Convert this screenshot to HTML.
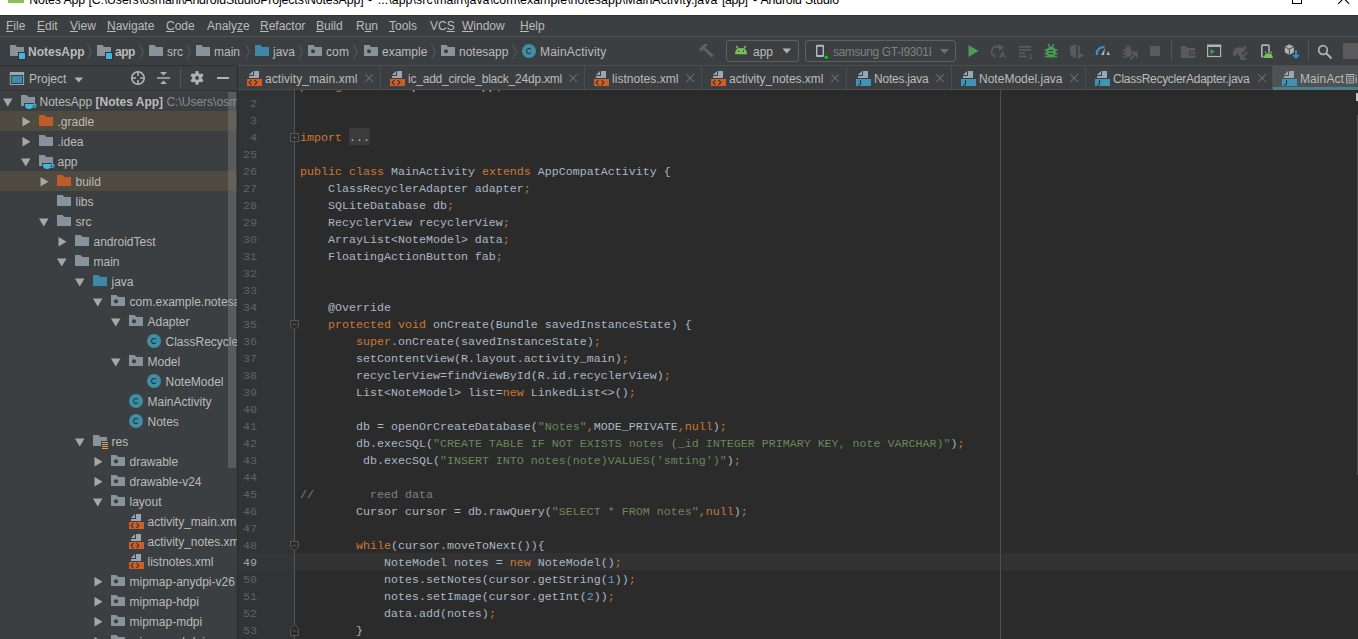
<!DOCTYPE html><html><head><meta charset="utf-8"><style>
*{margin:0;padding:0;box-sizing:border-box}
html,body{width:1358px;height:639px;overflow:hidden;background:#3c3f41}
body{position:relative;font-family:"Liberation Sans",sans-serif;font-size:12px;color:#bbbbbb}
.a{position:absolute}
.t{position:absolute;white-space:pre;line-height:14px;font-size:12px}
.m{position:absolute;white-space:pre;font-family:"Liberation Mono",monospace;font-size:11.67px;line-height:17px}
.k{color:#cc7832}.s{color:#6a8759}.n{color:#6897bb}.c{color:#808080}.an{color:#bbb529}
u{text-decoration:underline;text-underline-offset:1px;text-decoration-thickness:1px}
</style></head><body><div class="a" style="left:0px;top:0px;width:1358px;height:15px;background:#ffffff;"></div>
<div class="a" style="left:8px;top:0px;width:16px;height:3px;background:#8cc152;"></div>
<div class="t" style="left:29.3px;top:-7.28px;color:#000000;font-size:12.34px;letter-spacing:-0.122px;">Notes App [C:\Users\osmani\AndroidStudioProjects\NotesApp]</div>
<div class="t" style="left:368px;top:-7.28px;color:#000000;font-size:12.34px;letter-spacing:-0.109px;">-</div>
<div class="t" style="left:377.8px;top:-7.28px;color:#000000;font-size:12.34px;letter-spacing:0.068px;">...\app\src\main\java\com\example\notesapp\MainActivity.java</div>
<div class="t" style="left:721.9px;top:-7.28px;color:#000000;font-size:12.34px;letter-spacing:-0.349px;">[app]</div>
<div class="t" style="left:753px;top:-7.28px;color:#000000;font-size:12.34px;letter-spacing:-0.109px;">-</div>
<div class="t" style="left:760.5px;top:-7.28px;color:#000000;font-size:12.34px;letter-spacing:-0.182px;">Android Studio</div>
<div class="a" style="left:1292px;top:-6px;width:10px;height:10px;border:1px solid #000"></div>
<svg class="a" style="left:1330px;top:-10px" width="28" height="16"><path d="M8.2 13.8 L13.7 8.3 L19.2 13.8 M13.7 8.3 L8.2 2.8 M13.7 8.3 L19.2 2.8" stroke="#000" stroke-width="1.1" fill="none"/></svg>
<div class="a" style="left:0px;top:15px;width:1358px;height:1px;background:#303234;"></div>
<div class="a" style="left:0px;top:16px;width:1358px;height:20px;background:#3c3f41;"></div>
<div class="a" style="left:0px;top:36px;width:1358px;height:1px;background:#515151;"></div>
<div class="t" style="left:6px;top:18.84px;color:#bbbbbb;font-size:12px;"><u>F</u>ile</div>
<div class="t" style="left:37px;top:18.84px;color:#bbbbbb;font-size:12px;"><u>E</u>dit</div>
<div class="t" style="left:70px;top:18.84px;color:#bbbbbb;font-size:12px;"><u>V</u>iew</div>
<div class="t" style="left:107px;top:18.84px;color:#bbbbbb;font-size:12px;"><u>N</u>avigate</div>
<div class="t" style="left:166px;top:18.84px;color:#bbbbbb;font-size:12px;"><u>C</u>ode</div>
<div class="t" style="left:207px;top:18.84px;color:#bbbbbb;font-size:12px;">Analy<u>z</u>e</div>
<div class="t" style="left:260px;top:18.84px;color:#bbbbbb;font-size:12px;"><u>R</u>efactor</div>
<div class="t" style="left:316px;top:18.84px;color:#bbbbbb;font-size:12px;"><u>B</u>uild</div>
<div class="t" style="left:356px;top:18.84px;color:#bbbbbb;font-size:12px;">R<u>u</u>n</div>
<div class="t" style="left:389px;top:18.84px;color:#bbbbbb;font-size:12px;"><u>T</u>ools</div>
<div class="t" style="left:430px;top:18.84px;color:#bbbbbb;font-size:12px;">VC<u>S</u></div>
<div class="t" style="left:462px;top:18.84px;color:#bbbbbb;font-size:12px;"><u>W</u>indow</div>
<div class="t" style="left:520px;top:18.84px;color:#bbbbbb;font-size:12px;"><u>H</u>elp</div>
<div class="a" style="left:0px;top:37px;width:1358px;height:28px;background:#3c3f41;"></div>
<svg class="a" style="left:10px;top:45px" width="16" height="15" viewBox="0 0 16 15"><path d="M0 0 H5.5 L7 2 H14 V11 H0 Z" fill="#87939a"/><rect x="8" y="7" width="8" height="8" fill="#2e3133"/><rect x="9" y="8" width="6" height="6" fill="#40b6e0"/></svg>
<div class="t" style="left:28px;top:44.84px;color:#bbbbbb;font-size:12px;font-weight:bold">NotesApp</div>
<svg class="a" style="left:87px;top:44px" width="6" height="16" viewBox="0 0 6 16"><path d="M0.5 0.5 L4.5 7.7 L0.5 15" stroke="#5a5d5f" stroke-width="1" fill="none"/></svg>
<svg class="a" style="left:97px;top:45px" width="16" height="15" viewBox="0 0 16 15"><path d="M0 0 H5.5 L7 2 H14 V11 H0 Z" fill="#87939a"/><rect x="8" y="7" width="8" height="8" fill="#2e3133"/><rect x="9" y="8" width="6" height="6" fill="#40b6e0"/></svg>
<div class="t" style="left:115px;top:44.84px;color:#bbbbbb;font-size:12px;font-weight:bold;letter-spacing:-0.444px;">app</div>
<svg class="a" style="left:139px;top:44px" width="6" height="16" viewBox="0 0 6 16"><path d="M0.5 0.5 L4.5 7.7 L0.5 15" stroke="#5a5d5f" stroke-width="1" fill="none"/></svg>
<svg class="a" style="left:149px;top:45px" width="14" height="11" viewBox="0 0 14 11"><path d="M0 0 H5.5 L7 2 H14 V11 H0 Z" fill="#87939a"/></svg>
<div class="t" style="left:167px;top:44.84px;color:#bbbbbb;font-size:12px;">src</div>
<svg class="a" style="left:186px;top:44px" width="6" height="16" viewBox="0 0 6 16"><path d="M0.5 0.5 L4.5 7.7 L0.5 15" stroke="#5a5d5f" stroke-width="1" fill="none"/></svg>
<svg class="a" style="left:196px;top:45px" width="14" height="11" viewBox="0 0 14 11"><path d="M0 0 H5.5 L7 2 H14 V11 H0 Z" fill="#87939a"/></svg>
<div class="t" style="left:214px;top:44.84px;color:#bbbbbb;font-size:12px;">main</div>
<svg class="a" style="left:245px;top:44px" width="6" height="16" viewBox="0 0 6 16"><path d="M0.5 0.5 L4.5 7.7 L0.5 15" stroke="#5a5d5f" stroke-width="1" fill="none"/></svg>
<svg class="a" style="left:255px;top:45px" width="14" height="11" viewBox="0 0 14 11"><path d="M0 0 H5.5 L7 2 H14 V11 H0 Z" fill="#3d88a6"/></svg>
<div class="t" style="left:273px;top:44.84px;color:#bbbbbb;font-size:12px;">java</div>
<svg class="a" style="left:298px;top:44px" width="6" height="16" viewBox="0 0 6 16"><path d="M0.5 0.5 L4.5 7.7 L0.5 15" stroke="#5a5d5f" stroke-width="1" fill="none"/></svg>
<svg class="a" style="left:308px;top:45px" width="14" height="11" viewBox="0 0 14 11"><path d="M0 0 H5.5 L7 2 H14 V11 H0 Z" fill="#87939a"/><circle cx="5" cy="6.3" r="2" fill="#3c3f41"/></svg>
<div class="t" style="left:326px;top:44.84px;color:#bbbbbb;font-size:12px;letter-spacing:0.110px;">com</div>
<svg class="a" style="left:353px;top:44px" width="6" height="16" viewBox="0 0 6 16"><path d="M0.5 0.5 L4.5 7.7 L0.5 15" stroke="#5a5d5f" stroke-width="1" fill="none"/></svg>
<svg class="a" style="left:364px;top:45px" width="14" height="11" viewBox="0 0 14 11"><path d="M0 0 H5.5 L7 2 H14 V11 H0 Z" fill="#87939a"/><circle cx="5" cy="6.3" r="2" fill="#3c3f41"/></svg>
<div class="t" style="left:382px;top:44.84px;color:#bbbbbb;font-size:12px;">example</div>
<svg class="a" style="left:431px;top:44px" width="6" height="16" viewBox="0 0 6 16"><path d="M0.5 0.5 L4.5 7.7 L0.5 15" stroke="#5a5d5f" stroke-width="1" fill="none"/></svg>
<svg class="a" style="left:441px;top:45px" width="14" height="11" viewBox="0 0 14 11"><path d="M0 0 H5.5 L7 2 H14 V11 H0 Z" fill="#87939a"/><circle cx="5" cy="6.3" r="2" fill="#3c3f41"/></svg>
<div class="t" style="left:459px;top:44.84px;color:#bbbbbb;font-size:12px;">notesapp</div>
<svg class="a" style="left:512px;top:44px" width="6" height="16" viewBox="0 0 6 16"><path d="M0.5 0.5 L4.5 7.7 L0.5 15" stroke="#5a5d5f" stroke-width="1" fill="none"/></svg>
<svg class="a" style="left:522px;top:44px" width="14" height="14" viewBox="0 0 14 14"><circle cx="7.0" cy="7.0" r="7.0" fill="#3e8fa6"/><path d="M8.9 5.3 A2.5 2.5 0 1 0 8.9 8.7" stroke="#22363c" stroke-width="1.1" fill="none"/></svg>
<div class="t" style="left:540px;top:44.84px;color:#bbbbbb;font-size:12px;letter-spacing:0.207px;">MainActivity</div>
<svg class="a" style="left:696px;top:40px" width="20" height="20" viewBox="0 0 20 20"><path d="M2.8 9.4 L8.3 4.1 H12.2 L9.3 7.2 L5 11.5 Z" fill="#5f5f5f"/><path d="M7.5 7.8 L16.8 16.6" stroke="#5f5f5f" stroke-width="3"/></svg>
<div class="a" style="left:726px;top:40px;width:73px;height:22px;border:1px solid #5e6060;border-radius:3px"></div>
<svg class="a" style="left:734px;top:45px" width="14" height="10" viewBox="0 0 14 10"><path d="M1 9.2 Q1 3 7 3 Q13 3 13 9.2 Z" fill="#78c257"/><path d="M2.3 0.8 L4.3 3.8 M11.7 0.8 L9.7 3.8" stroke="#78c257" stroke-width="1.5"/><circle cx="4.6" cy="6.3" r="0.75" fill="#2e3133"/><circle cx="9.4" cy="6.3" r="0.75" fill="#2e3133"/></svg>
<div class="t" style="left:753px;top:44.84px;color:#bbbbbb;font-size:12px;">app</div>
<svg class="a" style="left:782px;top:48px" width="10" height="6" viewBox="0 0 10 6"><path d="M0.5 0.5 H9 L4.75 5.5 Z" fill="#afb1b3"/></svg>
<div class="a" style="left:805px;top:40px;width:151px;height:22px;border:1px solid #5e6060;border-radius:3px"></div>
<svg class="a" style="left:815px;top:44px" width="14" height="16" viewBox="0 0 14 16"><path fill-rule="evenodd" d="M2 0.8 H8 Q9 0.8 9 1.8 V12 Q9 13 8 13 H2 Q1 13 1 12 V1.8 Q1 0.8 2 0.8 Z M2.4 2.8 V11 H7.6 V2.8 Z" fill="#afb8bf"/><circle cx="11.3" cy="13.2" r="2.6" fill="#2e3133"/><circle cx="11.3" cy="13.2" r="1.9" fill="#00d000"/></svg>
<div class="t" style="left:833px;top:44.84px;color:#808080;font-size:12px;letter-spacing:-0.405px;">samsung GT-I9301I</div>
<svg class="a" style="left:940px;top:49px" width="9" height="6" viewBox="0 0 9 6"><path d="M0 0 H9 L4.5 5 Z" fill="#6e6e6e"/></svg>
<svg class="a" style="left:968px;top:45px" width="11" height="12" viewBox="0 0 11 12"><path d="M0.5 0 L10.5 6 L0.5 12 Z" fill="#499c54"/></svg>
<svg class="a" style="left:991px;top:43px" width="16" height="16" viewBox="0 0 16 16"><path d="M8.5 4.5 A5 5 0 1 0 5 13.5" stroke="#5a5a5a" stroke-width="1.8" fill="none"/><path d="M8 1 L13 4.5 L8 8 Z" fill="#5a5a5a"/><path d="M9 15 L11.5 9 L14 15 M10 13 H13" stroke="#5a5a5a" stroke-width="1.3" fill="none"/></svg>
<svg class="a" style="left:1018px;top:45px" width="16" height="15" viewBox="0 0 16 15"><rect x="1" y="1" width="12" height="1.6" fill="#5d5d5d"/><rect x="1" y="4.2" width="12" height="1.6" fill="#5d5d5d"/><rect x="1" y="7.4" width="6" height="1.6" fill="#5d5d5d"/><rect x="1" y="10.6" width="8" height="1.6" fill="#5d5d5d"/><path d="M11 9 A2.5 2.5 0 1 1 11 14" stroke="#5d5d5d" stroke-width="1" fill="none"/></svg>
<svg class="a" style="left:1044px;top:43px" width="14" height="15" viewBox="0 0 14 15"><ellipse cx="7" cy="9" rx="4.8" ry="5.5" fill="#499c54"/><path d="M4 1 L6 3.8 M10 1 L8 3.8 M0.5 7 H13.5 M0.5 10.5 H13.5 M1 13.5 H13" stroke="#499c54" stroke-width="1.4"/><rect x="4.5" y="7" width="5" height="1.2" fill="#3c3f41"/><rect x="4.5" y="10" width="5" height="1.2" fill="#3c3f41"/></svg>
<svg class="a" style="left:1069px;top:44px" width="17" height="16" viewBox="0 0 17 16"><path d="M1 2.5 L6 0.5 L11 2.5 V8 Q11 12 6 14 Q1 12 1 8 Z" fill="#5a5a5a"/><path d="M7 2 H9 V13 H7 Z" fill="#3c3f41"/><path d="M8.5 7.5 L16 11.5 L8.5 15.5 Z" fill="#5a5a5a" stroke="#3c3f41" stroke-width="0.8"/></svg>
<svg class="a" style="left:1095px;top:45px" width="16" height="11" viewBox="0 0 16 11"><path d="M2 10 A6.5 6.5 0 0 1 9.5 2.2" stroke="#3592c4" stroke-width="2.2" fill="none"/><path d="M6 10 L10 3 L9 10 Z" fill="#afb1b3"/><path d="M11.5 10 L13 6 L15 10 Z" fill="#afb1b3"/></svg>
<svg class="a" style="left:1122px;top:44px" width="16" height="16" viewBox="0 0 16 16"><path d="M4 1 L5.5 3.5 M8.5 1 L7 3.5 M0.5 6 H5 M0.5 9.5 H4.5 M1 13 H5" stroke="#5a5a5a" stroke-width="1.4"/><ellipse cx="6.2" cy="8" rx="3.5" ry="5" fill="#5a5a5a"/><path d="M8 15.5 L14.5 9 M10 8.5 H14.8 V13.3" stroke="#5a5a5a" stroke-width="1.8" fill="none"/></svg>
<div class="a" style="left:1150px;top:46px;width:10px;height:10px;background:#5a5a5a"></div>
<div class="a" style="left:1171px;top:41px;width:1px;height:20px;background:#515658;"></div>
<svg class="a" style="left:1181px;top:46px" width="15" height="13" viewBox="0 0 15 13"><path d="M0 0 H5 L6.5 2 H14 V5 H8 V12 H0 Z" fill="#5a5a5a"/><rect x="9" y="6" width="2.5" height="2.5" fill="#5a5a5a"/><rect x="12" y="6" width="2.5" height="2.5" fill="#5a5a5a"/><rect x="6.5" y="9.5" width="2.5" height="2.5" fill="#5a5a5a"/><rect x="9.5" y="9.5" width="2.5" height="2.5" fill="#5a5a5a"/><rect x="12" y="9.5" width="2.5" height="2.5" fill="#5a5a5a"/></svg>
<svg class="a" style="left:1206px;top:44px" width="16" height="14" viewBox="0 0 16 14"><rect x="1.6" y="1.3" width="13" height="11.2" stroke="#afb1b3" stroke-width="1.2" fill="none"/><rect x="1" y="0.7" width="14.2" height="2.3" fill="#afb1b3"/><path d="M4.5 5 L9 7.6 L4.5 10.2 Z" fill="#499c54"/></svg>
<svg class="a" style="left:1232px;top:44px" width="17" height="16" viewBox="0 0 17 16"><path d="M1 11.8 Q0.3 6.5 3.5 4.3 Q6.5 2.6 10 3.6 L11.8 3.2 Q12.8 0.3 13.9 1.5 Q14.6 3.5 13.6 5.2 L11.5 7.8 L8.5 11 V11.8 H6.3 V10 H4 V11.8 Z" fill="#5a5a5a"/><path d="M15.2 8.2 L10 13.6" stroke="#5a5a5a" stroke-width="1.9"/><path d="M9.2 9.8 V15 H14.4" stroke="#5a5a5a" stroke-width="1.9" fill="none"/></svg>
<svg class="a" style="left:1260px;top:44px" width="15" height="15" viewBox="0 0 15 15"><rect x="1.8" y="1.1" width="7.2" height="11.8" rx="1" stroke="#afb1b3" stroke-width="1.6" fill="none"/><path d="M3.3 14.3 Q3.3 8.6 8.4 8.6 Q13.5 8.6 13.5 14.3 Z" fill="#3c3f41"/><path d="M4 14 Q4 9.3 8.4 9.3 Q12.8 9.3 12.8 14 Z" fill="#78c257"/><path d="M5.2 7.6 L6.2 9.4 M11.6 7.6 L10.6 9.4" stroke="#78c257" stroke-width="1.1"/></svg>
<svg class="a" style="left:1284px;top:44px" width="17" height="16" viewBox="0 0 17 16"><path d="M0.8 2.8 L5.3 0.2 L9.9 2.8 V8.3 L5.3 10.9 L0.8 8.3 Z" fill="#afb1b3"/><path d="M0.8 2.8 L5.3 5.2 L9.9 2.8 M5.3 5.2 V10.9" stroke="#3c3f41" stroke-width="0.9" fill="none"/><path d="M12 6 V13.5" stroke="#3592c4" stroke-width="1.8"/><path d="M8 10.8 H16 L12 15 Z" fill="#3592c4"/></svg>
<div class="a" style="left:1308px;top:41px;width:1px;height:20px;background:#515658;"></div>
<svg class="a" style="left:1317px;top:44px" width="17" height="16" viewBox="0 0 17 16"><circle cx="6" cy="6" r="4.3" stroke="#afb1b3" stroke-width="1.7" fill="none"/><path d="M9 9 L14.5 14.5" stroke="#afb1b3" stroke-width="1.9"/></svg>
<div class="a" style="left:1343px;top:43px;width:15px;height:16px;background:#5a5a5a;"></div>
<div class="a" style="left:0px;top:65px;width:237px;height:25px;background:#3c3f41;"></div>
<div class="a" style="left:0px;top:65px;width:237px;height:1px;background:#323232;"></div>
<div class="a" style="left:0px;top:90px;width:237px;height:1px;background:#323232;"></div>
<svg class="a" style="left:9px;top:72px" width="16" height="14" viewBox="0 0 16 14"><rect x="0.8" y="0" width="14.3" height="13" fill="#9aa7b0"/><rect x="1.8" y="3" width="12.3" height="9" fill="#2e3133"/><rect x="2.6" y="3.8" width="10.7" height="7.4" fill="#3d8cab"/></svg>
<div class="t" style="left:29px;top:71.84px;color:#bbbbbb;font-size:12px;">Project</div>
<svg class="a" style="left:74px;top:77px" width="10" height="6" viewBox="0 0 10 6"><path d="M0.5 0.5 H9 L4.75 5.5 Z" fill="#afb1b3"/></svg>
<svg class="a" style="left:130px;top:70px" width="16" height="16" viewBox="0 0 16 16"><circle cx="8" cy="8" r="6.2" stroke="#afb1b3" stroke-width="1.6" fill="none"/><path d="M8 1 V6 M8 10 V15 M1 8 H6 M10 8 H15" stroke="#afb1b3" stroke-width="1.6"/></svg>
<svg class="a" style="left:157px;top:70px" width="14" height="16" viewBox="0 0 14 16"><path d="M0 8 H13" stroke="#afb1b3" stroke-width="1.5"/><path d="M3 2 H10 L6.5 5.5 Z M3 14 H10 L6.5 10.5 Z" fill="#afb1b3"/><path d="M0.5 0.8 H12.5 M0.5 15.2 H12.5" stroke="#afb1b3" stroke-width="0"/></svg>
<div class="a" style="left:180px;top:68px;width:1px;height:20px;background:#515658;"></div>
<svg class="a" style="left:189px;top:70px" width="16" height="16" viewBox="0 0 16 16"><g transform="translate(8 7.9)" fill="#afb1b3"><circle r="4.8"/><rect x="-1.6" y="-6.8" width="3.2" height="13.6" rx="1"/><rect x="-1.6" y="-6.8" width="3.2" height="13.6" rx="1" transform="rotate(60)"/><rect x="-1.6" y="-6.8" width="3.2" height="13.6" rx="1" transform="rotate(120)"/><circle r="1.9" fill="#3c3f41"/></g></svg>
<div class="a" style="left:217px;top:77px;width:12px;height:2px;background:#afb1b3;"></div>
<div class="a" style="left:237px;top:65px;width:1px;height:574px;background:#2b2b2b;"></div>
<div class="a" style="left:238px;top:65px;width:1120px;height:1px;background:#4b4d4f;"></div>
<div class="a" style="left:238px;top:66px;width:1120px;height:23px;background:#3c3f41;"></div>
<div class="a" style="left:238px;top:89px;width:1120px;height:1px;background:#4b4d4f;"></div>
<svg class="a" style="left:247px;top:71px" width="16" height="16" viewBox="0 0 16 16"><path d="M7 0 H12 V7 H2 V5 H7 Z" fill="#9aa7b0"/><path d="M2 4 L6 0 V4 Z" fill="#9aa7b0"/><rect x="0" y="8" width="15" height="7" fill="#cc5e28"/><path d="M4.5 9 L2.2 11.5 L4.5 14 M7.5 9 L9.8 11.5 L7.5 14" stroke="#2b2b2b" stroke-width="1.1" fill="none"/></svg>
<div class="t" style="left:265px;top:71.84px;color:#bbbbbb;font-size:12px;letter-spacing:0.068px;">activity_main.xml</div>
<svg class="a" style="left:365px;top:74px" width="9" height="9" viewBox="0 0 9 9"><path d="M0.4 0.4 L7.8 7.8 M7.8 0.4 L0.4 7.8" stroke="#6a6e70" stroke-width="1.05"/></svg>
<div class="a" style="left:380px;top:66px;width:1px;height:23px;background:#4b4d4f;"></div>
<svg class="a" style="left:390px;top:71px" width="16" height="16" viewBox="0 0 16 16"><path d="M7 0 H12 V7 H2 V5 H7 Z" fill="#9aa7b0"/><path d="M2 4 L6 0 V4 Z" fill="#9aa7b0"/><rect x="0" y="8" width="15" height="7" fill="#cc5e28"/><path d="M4.5 9 L2.2 11.5 L4.5 14 M7.5 9 L9.8 11.5 L7.5 14" stroke="#2b2b2b" stroke-width="1.1" fill="none"/></svg>
<div class="t" style="left:408px;top:71.84px;color:#bbbbbb;font-size:12px;letter-spacing:-0.217px;">ic_add_circle_black_24dp.xml</div>
<svg class="a" style="left:569px;top:74px" width="9" height="9" viewBox="0 0 9 9"><path d="M0.4 0.4 L7.8 7.8 M7.8 0.4 L0.4 7.8" stroke="#6a6e70" stroke-width="1.05"/></svg>
<div class="a" style="left:584px;top:66px;width:1px;height:23px;background:#4b4d4f;"></div>
<svg class="a" style="left:594px;top:71px" width="16" height="16" viewBox="0 0 16 16"><path d="M7 0 H12 V7 H2 V5 H7 Z" fill="#9aa7b0"/><path d="M2 4 L6 0 V4 Z" fill="#9aa7b0"/><rect x="0" y="8" width="15" height="7" fill="#cc5e28"/><path d="M4.5 9 L2.2 11.5 L4.5 14 M7.5 9 L9.8 11.5 L7.5 14" stroke="#2b2b2b" stroke-width="1.1" fill="none"/></svg>
<div class="t" style="left:612px;top:71.84px;color:#bbbbbb;font-size:12px;letter-spacing:0.037px;">listnotes.xml</div>
<svg class="a" style="left:686px;top:74px" width="9" height="9" viewBox="0 0 9 9"><path d="M0.4 0.4 L7.8 7.8 M7.8 0.4 L0.4 7.8" stroke="#6a6e70" stroke-width="1.05"/></svg>
<div class="a" style="left:701px;top:66px;width:1px;height:23px;background:#4b4d4f;"></div>
<svg class="a" style="left:711px;top:71px" width="16" height="16" viewBox="0 0 16 16"><path d="M7 0 H12 V7 H2 V5 H7 Z" fill="#9aa7b0"/><path d="M2 4 L6 0 V4 Z" fill="#9aa7b0"/><rect x="0" y="8" width="15" height="7" fill="#cc5e28"/><path d="M4.5 9 L2.2 11.5 L4.5 14 M7.5 9 L9.8 11.5 L7.5 14" stroke="#2b2b2b" stroke-width="1.1" fill="none"/></svg>
<div class="t" style="left:729px;top:71.84px;color:#bbbbbb;font-size:12px;letter-spacing:-0.011px;">activity_notes.xml</div>
<svg class="a" style="left:831px;top:74px" width="9" height="9" viewBox="0 0 9 9"><path d="M0.4 0.4 L7.8 7.8 M7.8 0.4 L0.4 7.8" stroke="#6a6e70" stroke-width="1.05"/></svg>
<div class="a" style="left:846px;top:66px;width:1px;height:23px;background:#4b4d4f;"></div>
<svg class="a" style="left:856px;top:71px" width="16" height="16" viewBox="0 0 16 16"><path d="M7 0 H12 V7 H2 V5 H7 Z" fill="#9aa7b0"/><path d="M2 4 L6 0 V4 Z" fill="#9aa7b0"/><rect x="0" y="8" width="15" height="7" fill="#4093b2"/><path d="M4.5 9 V12.8 Q4.5 14 3.3 14 H2" stroke="#23363d" stroke-width="1.1" fill="none"/></svg>
<div class="t" style="left:874px;top:71.84px;color:#bbbbbb;font-size:12px;letter-spacing:-0.219px;">Notes.java</div>
<svg class="a" style="left:936px;top:74px" width="9" height="9" viewBox="0 0 9 9"><path d="M0.4 0.4 L7.8 7.8 M7.8 0.4 L0.4 7.8" stroke="#6a6e70" stroke-width="1.05"/></svg>
<div class="a" style="left:951px;top:66px;width:1px;height:23px;background:#4b4d4f;"></div>
<svg class="a" style="left:961px;top:71px" width="16" height="16" viewBox="0 0 16 16"><path d="M7 0 H12 V7 H2 V5 H7 Z" fill="#9aa7b0"/><path d="M2 4 L6 0 V4 Z" fill="#9aa7b0"/><rect x="0" y="8" width="15" height="7" fill="#4093b2"/><path d="M4.5 9 V12.8 Q4.5 14 3.3 14 H2" stroke="#23363d" stroke-width="1.1" fill="none"/></svg>
<div class="t" style="left:979px;top:71.84px;color:#bbbbbb;font-size:12px;letter-spacing:0.009px;">NoteModel.java</div>
<svg class="a" style="left:1070px;top:74px" width="9" height="9" viewBox="0 0 9 9"><path d="M0.4 0.4 L7.8 7.8 M7.8 0.4 L0.4 7.8" stroke="#6a6e70" stroke-width="1.05"/></svg>
<div class="a" style="left:1085px;top:66px;width:1px;height:23px;background:#4b4d4f;"></div>
<svg class="a" style="left:1095px;top:71px" width="16" height="16" viewBox="0 0 16 16"><path d="M7 0 H12 V7 H2 V5 H7 Z" fill="#9aa7b0"/><path d="M2 4 L6 0 V4 Z" fill="#9aa7b0"/><rect x="0" y="8" width="15" height="7" fill="#4093b2"/><path d="M4.5 9 V12.8 Q4.5 14 3.3 14 H2" stroke="#23363d" stroke-width="1.1" fill="none"/></svg>
<div class="t" style="left:1113px;top:71.84px;color:#bbbbbb;font-size:12px;letter-spacing:-0.276px;">ClassRecyclerAdapter.java</div>
<svg class="a" style="left:1258px;top:74px" width="9" height="9" viewBox="0 0 9 9"><path d="M0.4 0.4 L7.8 7.8 M7.8 0.4 L0.4 7.8" stroke="#6a6e70" stroke-width="1.05"/></svg>
<div class="a" style="left:1272px;top:66px;width:1px;height:23px;background:#4b4d4f;"></div>
<div class="a" style="left:1273px;top:66px;width:85px;height:21px;background:#4e5254;"></div>
<div class="a" style="left:1273px;top:87px;width:85px;height:3px;background:#4a7f90;"></div>
<svg class="a" style="left:1282px;top:71px" width="16" height="16" viewBox="0 0 16 16"><path d="M7 0 H12 V7 H2 V5 H7 Z" fill="#9aa7b0"/><path d="M2 4 L6 0 V4 Z" fill="#9aa7b0"/><rect x="0" y="8" width="15" height="7" fill="#4093b2"/><path d="M4.5 9 V12.8 Q4.5 14 3.3 14 H2" stroke="#23363d" stroke-width="1.1" fill="none"/></svg>
<div class="t" style="left:1300px;top:71.84px;color:#bbbbbb;font-size:12px;letter-spacing:0.093px;">MainAct</div>
<svg class="a" style="left:1345px;top:73px" width="13" height="11" viewBox="0 0 13 11"><rect x="0.5" y="1" width="9" height="1.2" fill="#b4b4b4"/><rect x="1.5" y="3.5" width="7" height="6.5" stroke="#a8a8a8" stroke-width="1" fill="none"/><path d="M1.5 5.8 H8.5 M1.5 7.8 H8.5 M5 3.5 V10" stroke="#9a9a9a" stroke-width="0.9"/><rect x="10.5" y="4" width="1.1" height="6" fill="#bbbbbb"/><rect x="10.5" y="2" width="1.1" height="1.1" fill="#bbbbbb"/></svg>
<div class="a" style="left:0px;top:91px;width:237px;height:548px;background:#3c3f41;"></div>
<div class="a" style="left:0;top:0;width:237px;height:639px;overflow:hidden"><svg class="a" style="left:3px;top:98px" width="10" height="9"><path d="M0 0.5 H9.5 L4.75 8.5 Z" fill="#a7a7a7"/></svg><svg class="a" style="left:21px;top:95px" width="17" height="15" viewBox="0 0 17 15"><path d="M0 0 H5.5 L7.5 2 H14 V11 H0 Z" fill="#87939a"/><path d="M3 8 H13 V10 Q13 15 8 15 Q3 15 3 10 Z" fill="#3c3f41"/><path d="M4 9 H12 V10 Q12 14 8 14 Q4 14 4 10 Z" fill="#40b6e0"/><path d="M12 9.8 Q15.5 9.2 15 11.2 Q14.5 12.5 11.5 12.5" stroke="#40b6e0" stroke-width="1.1" fill="none"/></svg><div class="t" style="left:39.5px;top:95.34px;color:#bbbbbb;">NotesApp <b>[Notes App]</b> <span style="color:#8c8c8c">C:\Users\osmani\AndroidStudioProjects\NotesApp</span></div><div class="a" style="left:0;top:111px;width:237px;height:20px;background:#4f4b40"></div><svg class="a" style="left:22px;top:117px" width="9" height="10"><path d="M0.5 0 L8.5 4.75 L0.5 9.5 Z" fill="#a7a7a7"/></svg><svg class="a" style="left:39px;top:115px" width="14" height="11" viewBox="0 0 14 11"><path d="M0 0 H5.5 L7.5 2 H14 V11 H0 Z" fill="#bf5b28"/></svg><div class="t" style="left:57.5px;top:115.34px;color:#bbbbbb;">.gradle</div><svg class="a" style="left:22px;top:137px" width="9" height="10"><path d="M0.5 0 L8.5 4.75 L0.5 9.5 Z" fill="#a7a7a7"/></svg><svg class="a" style="left:39px;top:135px" width="14" height="11" viewBox="0 0 14 11"><path d="M0 0 H5.5 L7.5 2 H14 V11 H0 Z" fill="#87939a"/></svg><div class="t" style="left:57.5px;top:135.34px;color:#bbbbbb;">.idea</div><svg class="a" style="left:21px;top:158px" width="10" height="9"><path d="M0 0.5 H9.5 L4.75 8.5 Z" fill="#a7a7a7"/></svg><svg class="a" style="left:39px;top:155px" width="17" height="15" viewBox="0 0 17 15"><path d="M0 0 H5.5 L7.5 2 H14 V11 H0 Z" fill="#87939a"/><path d="M3 8 H13 V10 Q13 15 8 15 Q3 15 3 10 Z" fill="#3c3f41"/><path d="M4 9 H12 V10 Q12 14 8 14 Q4 14 4 10 Z" fill="#40b6e0"/><path d="M12 9.8 Q15.5 9.2 15 11.2 Q14.5 12.5 11.5 12.5" stroke="#40b6e0" stroke-width="1.1" fill="none"/></svg><div class="t" style="left:57.5px;top:155.34px;color:#bbbbbb;">app</div><div class="a" style="left:0;top:171px;width:237px;height:20px;background:#4f4b40"></div><svg class="a" style="left:40px;top:177px" width="9" height="10"><path d="M0.5 0 L8.5 4.75 L0.5 9.5 Z" fill="#a7a7a7"/></svg><svg class="a" style="left:57px;top:175px" width="14" height="11" viewBox="0 0 14 11"><path d="M0 0 H5.5 L7.5 2 H14 V11 H0 Z" fill="#bf5b28"/></svg><div class="t" style="left:75.5px;top:175.34px;color:#bbbbbb;">build</div><svg class="a" style="left:57px;top:195px" width="14" height="11" viewBox="0 0 14 11"><path d="M0 0 H5.5 L7.5 2 H14 V11 H0 Z" fill="#87939a"/></svg><div class="t" style="left:75.5px;top:195.34px;color:#bbbbbb;">libs</div><svg class="a" style="left:39px;top:218px" width="10" height="9"><path d="M0 0.5 H9.5 L4.75 8.5 Z" fill="#a7a7a7"/></svg><svg class="a" style="left:57px;top:215px" width="14" height="11" viewBox="0 0 14 11"><path d="M0 0 H5.5 L7.5 2 H14 V11 H0 Z" fill="#87939a"/></svg><div class="t" style="left:75.5px;top:215.34px;color:#bbbbbb;">src</div><svg class="a" style="left:58px;top:237px" width="9" height="10"><path d="M0.5 0 L8.5 4.75 L0.5 9.5 Z" fill="#a7a7a7"/></svg><svg class="a" style="left:75px;top:235px" width="14" height="11" viewBox="0 0 14 11"><path d="M0 0 H5.5 L7.5 2 H14 V11 H0 Z" fill="#87939a"/></svg><div class="t" style="left:93.5px;top:235.34px;color:#bbbbbb;">androidTest</div><svg class="a" style="left:57px;top:258px" width="10" height="9"><path d="M0 0.5 H9.5 L4.75 8.5 Z" fill="#a7a7a7"/></svg><svg class="a" style="left:75px;top:255px" width="14" height="11" viewBox="0 0 14 11"><path d="M0 0 H5.5 L7.5 2 H14 V11 H0 Z" fill="#87939a"/></svg><div class="t" style="left:93.5px;top:255.34px;color:#bbbbbb;">main</div><svg class="a" style="left:75px;top:278px" width="10" height="9"><path d="M0 0.5 H9.5 L4.75 8.5 Z" fill="#a7a7a7"/></svg><svg class="a" style="left:93px;top:275px" width="14" height="11" viewBox="0 0 14 11"><path d="M0 0 H5.5 L7.5 2 H14 V11 H0 Z" fill="#3d88a6"/></svg><div class="t" style="left:111.5px;top:275.34px;color:#bbbbbb;">java</div><svg class="a" style="left:93px;top:298px" width="10" height="9"><path d="M0 0.5 H9.5 L4.75 8.5 Z" fill="#a7a7a7"/></svg><svg class="a" style="left:111px;top:295px" width="14" height="11" viewBox="0 0 14 11"><path d="M0 0 H5.5 L7.5 2 H14 V11 H0 Z" fill="#87939a"/><circle cx="5" cy="6.3" r="2.1" fill="#3c3f41"/></svg><div class="t" style="left:129.5px;top:295.34px;color:#bbbbbb;">com.example.notesapp</div><svg class="a" style="left:111px;top:318px" width="10" height="9"><path d="M0 0.5 H9.5 L4.75 8.5 Z" fill="#a7a7a7"/></svg><svg class="a" style="left:129px;top:315px" width="14" height="11" viewBox="0 0 14 11"><path d="M0 0 H5.5 L7.5 2 H14 V11 H0 Z" fill="#87939a"/><circle cx="5" cy="6.3" r="2.1" fill="#3c3f41"/></svg><div class="t" style="left:147.5px;top:315.34px;color:#bbbbbb;">Adapter</div><svg class="a" style="left:147px;top:334px" width="14" height="14" viewBox="0 0 14 14"><circle cx="7" cy="7" r="7" fill="#3e8fa6"/><path d="M8.9 5.3 A2.5 2.5 0 1 0 8.9 8.7" stroke="#22363c" stroke-width="1.1" fill="none"/></svg><div class="t" style="left:165.5px;top:335.34px;color:#bbbbbb;">ClassRecyclerAdapter</div><svg class="a" style="left:111px;top:358px" width="10" height="9"><path d="M0 0.5 H9.5 L4.75 8.5 Z" fill="#a7a7a7"/></svg><svg class="a" style="left:129px;top:355px" width="14" height="11" viewBox="0 0 14 11"><path d="M0 0 H5.5 L7.5 2 H14 V11 H0 Z" fill="#87939a"/><circle cx="5" cy="6.3" r="2.1" fill="#3c3f41"/></svg><div class="t" style="left:147.5px;top:355.34px;color:#bbbbbb;">Model</div><svg class="a" style="left:147px;top:374px" width="14" height="14" viewBox="0 0 14 14"><circle cx="7" cy="7" r="7" fill="#3e8fa6"/><path d="M8.9 5.3 A2.5 2.5 0 1 0 8.9 8.7" stroke="#22363c" stroke-width="1.1" fill="none"/></svg><div class="t" style="left:165.5px;top:375.34px;color:#bbbbbb;">NoteModel</div><svg class="a" style="left:129px;top:394px" width="14" height="14" viewBox="0 0 14 14"><circle cx="7" cy="7" r="7" fill="#3e8fa6"/><path d="M8.9 5.3 A2.5 2.5 0 1 0 8.9 8.7" stroke="#22363c" stroke-width="1.1" fill="none"/></svg><div class="t" style="left:147.5px;top:395.34px;color:#bbbbbb;">MainActivity</div><svg class="a" style="left:129px;top:414px" width="14" height="14" viewBox="0 0 14 14"><circle cx="7" cy="7" r="7" fill="#3e8fa6"/><path d="M8.9 5.3 A2.5 2.5 0 1 0 8.9 8.7" stroke="#22363c" stroke-width="1.1" fill="none"/></svg><div class="t" style="left:147.5px;top:415.34px;color:#bbbbbb;">Notes</div><svg class="a" style="left:75px;top:438px" width="10" height="9"><path d="M0 0.5 H9.5 L4.75 8.5 Z" fill="#a7a7a7"/></svg><svg class="a" style="left:93px;top:435px" width="16" height="15" viewBox="0 0 16 15"><path d="M0 0 H5.5 L7.5 2 H14 V11 H0 Z" fill="#87939a"/><rect x="8" y="6" width="8" height="9" fill="#3c3f41"/><path d="M9 7.5 H15 M9 9.5 H15 M9 11.5 H15 M9 13.5 H15" stroke="#d9a343" stroke-width="1"/></svg><div class="t" style="left:111.5px;top:435.34px;color:#bbbbbb;">res</div><svg class="a" style="left:94px;top:457px" width="9" height="10"><path d="M0.5 0 L8.5 4.75 L0.5 9.5 Z" fill="#a7a7a7"/></svg><svg class="a" style="left:111px;top:455px" width="14" height="11" viewBox="0 0 14 11"><path d="M0 0 H5.5 L7.5 2 H14 V11 H0 Z" fill="#87939a"/><circle cx="5" cy="6.3" r="2.1" fill="#3c3f41"/></svg><div class="t" style="left:129.5px;top:455.34px;color:#bbbbbb;">drawable</div><svg class="a" style="left:94px;top:477px" width="9" height="10"><path d="M0.5 0 L8.5 4.75 L0.5 9.5 Z" fill="#a7a7a7"/></svg><svg class="a" style="left:111px;top:475px" width="14" height="11" viewBox="0 0 14 11"><path d="M0 0 H5.5 L7.5 2 H14 V11 H0 Z" fill="#87939a"/><circle cx="5" cy="6.3" r="2.1" fill="#3c3f41"/></svg><div class="t" style="left:129.5px;top:475.34px;color:#bbbbbb;">drawable-v24</div><svg class="a" style="left:93px;top:498px" width="10" height="9"><path d="M0 0.5 H9.5 L4.75 8.5 Z" fill="#a7a7a7"/></svg><svg class="a" style="left:111px;top:495px" width="14" height="11" viewBox="0 0 14 11"><path d="M0 0 H5.5 L7.5 2 H14 V11 H0 Z" fill="#87939a"/><circle cx="5" cy="6.3" r="2.1" fill="#3c3f41"/></svg><div class="t" style="left:129.5px;top:495.34px;color:#bbbbbb;">layout</div><svg class="a" style="left:129px;top:514px" width="16" height="16" viewBox="0 0 16 16"><path d="M7 0 H12 V7 H2 V5 H7 Z" fill="#9aa7b0"/><path d="M2 4 L6 0 V4 Z" fill="#9aa7b0"/><rect x="0" y="8" width="15" height="7" fill="#cc5e28"/><path d="M4.5 9 L2.2 11.5 L4.5 14 M7.5 9 L9.8 11.5 L7.5 14" stroke="#2b2b2b" stroke-width="1.1" fill="none"/></svg><div class="t" style="left:147.5px;top:515.34px;color:#bbbbbb;">activity_main.xml</div><svg class="a" style="left:129px;top:534px" width="16" height="16" viewBox="0 0 16 16"><path d="M7 0 H12 V7 H2 V5 H7 Z" fill="#9aa7b0"/><path d="M2 4 L6 0 V4 Z" fill="#9aa7b0"/><rect x="0" y="8" width="15" height="7" fill="#cc5e28"/><path d="M4.5 9 L2.2 11.5 L4.5 14 M7.5 9 L9.8 11.5 L7.5 14" stroke="#2b2b2b" stroke-width="1.1" fill="none"/></svg><div class="t" style="left:147.5px;top:535.34px;color:#bbbbbb;">activity_notes.xml</div><svg class="a" style="left:129px;top:554px" width="16" height="16" viewBox="0 0 16 16"><path d="M7 0 H12 V7 H2 V5 H7 Z" fill="#9aa7b0"/><path d="M2 4 L6 0 V4 Z" fill="#9aa7b0"/><rect x="0" y="8" width="15" height="7" fill="#cc5e28"/><path d="M4.5 9 L2.2 11.5 L4.5 14 M7.5 9 L9.8 11.5 L7.5 14" stroke="#2b2b2b" stroke-width="1.1" fill="none"/></svg><div class="t" style="left:147.5px;top:555.34px;color:#bbbbbb;">listnotes.xml</div><svg class="a" style="left:94px;top:577px" width="9" height="10"><path d="M0.5 0 L8.5 4.75 L0.5 9.5 Z" fill="#a7a7a7"/></svg><svg class="a" style="left:111px;top:575px" width="14" height="11" viewBox="0 0 14 11"><path d="M0 0 H5.5 L7.5 2 H14 V11 H0 Z" fill="#87939a"/><circle cx="5" cy="6.3" r="2.1" fill="#3c3f41"/></svg><div class="t" style="left:129.5px;top:575.34px;color:#bbbbbb;">mipmap-anydpi-v26</div><svg class="a" style="left:94px;top:597px" width="9" height="10"><path d="M0.5 0 L8.5 4.75 L0.5 9.5 Z" fill="#a7a7a7"/></svg><svg class="a" style="left:111px;top:595px" width="14" height="11" viewBox="0 0 14 11"><path d="M0 0 H5.5 L7.5 2 H14 V11 H0 Z" fill="#87939a"/><circle cx="5" cy="6.3" r="2.1" fill="#3c3f41"/></svg><div class="t" style="left:129.5px;top:595.34px;color:#bbbbbb;">mipmap-hdpi</div><svg class="a" style="left:94px;top:617px" width="9" height="10"><path d="M0.5 0 L8.5 4.75 L0.5 9.5 Z" fill="#a7a7a7"/></svg><svg class="a" style="left:111px;top:615px" width="14" height="11" viewBox="0 0 14 11"><path d="M0 0 H5.5 L7.5 2 H14 V11 H0 Z" fill="#87939a"/><circle cx="5" cy="6.3" r="2.1" fill="#3c3f41"/></svg><div class="t" style="left:129.5px;top:615.34px;color:#bbbbbb;">mipmap-mdpi</div><svg class="a" style="left:94px;top:637px" width="9" height="10"><path d="M0.5 0 L8.5 4.75 L0.5 9.5 Z" fill="#a7a7a7"/></svg><svg class="a" style="left:111px;top:635px" width="14" height="11" viewBox="0 0 14 11"><path d="M0 0 H5.5 L7.5 2 H14 V11 H0 Z" fill="#87939a"/><circle cx="5" cy="6.3" r="2.1" fill="#3c3f41"/></svg><div class="t" style="left:129.5px;top:635.34px;color:#bbbbbb;">mipmap-xhdpi</div></div>
<div class="a" style="left:228px;top:92px;width:8px;height:376px;background:rgba(140,140,140,0.35);"></div>
<div class="a" style="left:238px;top:90px;width:1120px;height:549px;background:#2b2b2b;"></div>
<div class="a" style="left:238px;top:90px;width:56px;height:549px;background:#313335;"></div>
<div class="a" style="left:294px;top:90px;width:1px;height:549px;background:#555555;"></div>
<div class="a" style="left:1000px;top:90px;width:1px;height:549px;background:#4f4f4f;"></div>
<div class="a" style="left:238px;top:553px;width:56px;height:17px;background:#333537;"></div>
<div class="a" style="left:295px;top:553px;width:705px;height:17px;background:#323232;"></div>
<div class="a" style="left:1001px;top:553px;width:357px;height:17px;background:#323232;"></div>
<div class="a" style="left:349px;top:128px;width:21px;height:17px;background:#3b3b3b;"></div>
<div class="a" style="left:238px;top:90px;width:1120px;height:549px;overflow:hidden"><div class="a" style="left:-238px;top:-90px;width:1358px;height:639px"><div class="m" style="left:300px;top:79px;color:#a9b7c6"><span class="k">package</span> com.example.notesapp<span class="k">;</span></div><div class="m" style="left:201px;width:56px;text-align:right;top:79px;color:#606366">1</div><div class="m" style="left:300px;top:96px;color:#a9b7c6"></div><div class="m" style="left:201px;width:56px;text-align:right;top:96px;color:#606366">2</div><div class="m" style="left:300px;top:113px;color:#a9b7c6"></div><div class="m" style="left:201px;width:56px;text-align:right;top:113px;color:#606366">3</div><div class="m" style="left:300px;top:130px;color:#a9b7c6"><span class="k">import</span> <span style="color:#a9b7c6">...</span></div><div class="m" style="left:201px;width:56px;text-align:right;top:130px;color:#606366">4</div><div class="m" style="left:300px;top:147px;color:#a9b7c6"></div><div class="m" style="left:201px;width:56px;text-align:right;top:147px;color:#606366">25</div><div class="m" style="left:300px;top:164px;color:#a9b7c6"><span class="k">public class</span> MainActivity <span class="k">extends</span> AppCompatActivity {</div><div class="m" style="left:201px;width:56px;text-align:right;top:164px;color:#606366">26</div><div class="m" style="left:300px;top:181px;color:#a9b7c6">    ClassRecyclerAdapter adapter<span class="k">;</span></div><div class="m" style="left:201px;width:56px;text-align:right;top:181px;color:#606366">27</div><div class="m" style="left:300px;top:198px;color:#a9b7c6">    SQLiteDatabase db<span class="k">;</span></div><div class="m" style="left:201px;width:56px;text-align:right;top:198px;color:#606366">28</div><div class="m" style="left:300px;top:215px;color:#a9b7c6">    RecyclerView recyclerView<span class="k">;</span></div><div class="m" style="left:201px;width:56px;text-align:right;top:215px;color:#606366">29</div><div class="m" style="left:300px;top:232px;color:#a9b7c6">    ArrayList&lt;NoteModel&gt; data<span class="k">;</span></div><div class="m" style="left:201px;width:56px;text-align:right;top:232px;color:#606366">30</div><div class="m" style="left:300px;top:249px;color:#a9b7c6">    FloatingActionButton fab<span class="k">;</span></div><div class="m" style="left:201px;width:56px;text-align:right;top:249px;color:#606366">31</div><div class="m" style="left:300px;top:266px;color:#a9b7c6"></div><div class="m" style="left:201px;width:56px;text-align:right;top:266px;color:#606366">32</div><div class="m" style="left:300px;top:283px;color:#a9b7c6"></div><div class="m" style="left:201px;width:56px;text-align:right;top:283px;color:#606366">33</div><div class="m" style="left:300px;top:300px;color:#a9b7c6">    @Override</div><div class="m" style="left:201px;width:56px;text-align:right;top:300px;color:#606366">34</div><div class="m" style="left:300px;top:317px;color:#a9b7c6">    <span class="k">protected void</span> onCreate(Bundle savedInstanceState) {</div><div class="m" style="left:201px;width:56px;text-align:right;top:317px;color:#606366">35</div><div class="m" style="left:300px;top:334px;color:#a9b7c6">        <span class="k">super</span>.onCreate(savedInstanceState)<span class="k">;</span></div><div class="m" style="left:201px;width:56px;text-align:right;top:334px;color:#606366">36</div><div class="m" style="left:300px;top:351px;color:#a9b7c6">        setContentView(R.layout.activity_main)<span class="k">;</span></div><div class="m" style="left:201px;width:56px;text-align:right;top:351px;color:#606366">37</div><div class="m" style="left:300px;top:368px;color:#a9b7c6">        recyclerView=findViewById(R.id.recyclerView)<span class="k">;</span></div><div class="m" style="left:201px;width:56px;text-align:right;top:368px;color:#606366">38</div><div class="m" style="left:300px;top:385px;color:#a9b7c6">        List&lt;NoteModel&gt; list=<span class="k">new</span> LinkedList&lt;&gt;()<span class="k">;</span></div><div class="m" style="left:201px;width:56px;text-align:right;top:385px;color:#606366">39</div><div class="m" style="left:300px;top:402px;color:#a9b7c6"></div><div class="m" style="left:201px;width:56px;text-align:right;top:402px;color:#606366">40</div><div class="m" style="left:300px;top:419px;color:#a9b7c6">        db = openOrCreateDatabase(<span class="s">"Notes"</span><span class="k">,</span>MODE_PRIVATE<span class="k">,null</span>)<span class="k">;</span></div><div class="m" style="left:201px;width:56px;text-align:right;top:419px;color:#606366">41</div><div class="m" style="left:300px;top:436px;color:#a9b7c6">        db.execSQL(<span class="s">"CREATE TABLE IF NOT EXISTS notes (_id INTEGER PRIMARY KEY, note VARCHAR)"</span>)<span class="k">;</span></div><div class="m" style="left:201px;width:56px;text-align:right;top:436px;color:#606366">42</div><div class="m" style="left:300px;top:453px;color:#a9b7c6">         db.execSQL(<span class="s">"INSERT INTO notes(note)VALUES('smting')"</span>)<span class="k">;</span></div><div class="m" style="left:201px;width:56px;text-align:right;top:453px;color:#606366">43</div><div class="m" style="left:300px;top:470px;color:#a9b7c6"></div><div class="m" style="left:201px;width:56px;text-align:right;top:470px;color:#606366">44</div><div class="m" style="left:300px;top:487px;color:#a9b7c6"><span class="c">//        reed data</span></div><div class="m" style="left:201px;width:56px;text-align:right;top:487px;color:#606366">45</div><div class="m" style="left:300px;top:504px;color:#a9b7c6">        Cursor cursor = db.rawQuery(<span class="s">"SELECT * FROM notes"</span><span class="k">,null</span>)<span class="k">;</span></div><div class="m" style="left:201px;width:56px;text-align:right;top:504px;color:#606366">46</div><div class="m" style="left:300px;top:521px;color:#a9b7c6"></div><div class="m" style="left:201px;width:56px;text-align:right;top:521px;color:#606366">47</div><div class="m" style="left:300px;top:538px;color:#a9b7c6">        <span class="k">while</span>(cursor.moveToNext()){</div><div class="m" style="left:201px;width:56px;text-align:right;top:538px;color:#606366">48</div><div class="m" style="left:300px;top:555px;color:#a9b7c6">            NoteModel notes = <span class="k">new</span> NoteModel()<span class="k">;</span></div><div class="m" style="left:201px;width:56px;text-align:right;top:555px;color:#a4a3a3">49</div><div class="m" style="left:300px;top:572px;color:#a9b7c6">            notes.setNotes(cursor.getString(<span class="n">1</span>))<span class="k">;</span></div><div class="m" style="left:201px;width:56px;text-align:right;top:572px;color:#606366">50</div><div class="m" style="left:300px;top:589px;color:#a9b7c6">            notes.setImage(cursor.getInt(<span class="n">2</span>))<span class="k">;</span></div><div class="m" style="left:201px;width:56px;text-align:right;top:589px;color:#606366">51</div><div class="m" style="left:300px;top:606px;color:#a9b7c6">            data.add(notes)<span class="k">;</span></div><div class="m" style="left:201px;width:56px;text-align:right;top:606px;color:#606366">52</div><div class="m" style="left:300px;top:623px;color:#a9b7c6">        }</div><div class="m" style="left:201px;width:56px;text-align:right;top:623px;color:#606366">53</div></div></div>
<svg class="a" style="left:289px;top:132px" width="11" height="11" viewBox="0 0 11 11"><rect x="1.5" y="1.5" width="8" height="8" fill="#2b2b2b" stroke="#555555" stroke-width="1"/><path d="M3.5 5.5 H7.5 M5.5 3.5 V7.5" stroke="#555555" stroke-width="1"/></svg>
<svg class="a" style="left:289px;top:320px" width="11" height="11" viewBox="0 0 11 11"><path d="M1.5 0.5 H9.5 V6 L5.5 10 L1.5 6 Z" fill="#2b2b2b" stroke="#555555" stroke-width="1"/><path d="M3.5 4.5 H7.5" stroke="#555555" stroke-width="1"/></svg>
<svg class="a" style="left:289px;top:541px" width="11" height="11" viewBox="0 0 11 11"><path d="M1.5 0.5 H9.5 V6 L5.5 10 L1.5 6 Z" fill="#2b2b2b" stroke="#555555" stroke-width="1"/><path d="M3.5 4.5 H7.5" stroke="#555555" stroke-width="1"/></svg>
<svg class="a" style="left:289px;top:624px" width="11" height="12" viewBox="0 0 11 12"><path d="M1.5 11.5 H9.5 V4.5 L5.5 0.5 L1.5 4.5 Z" fill="#2b2b2b" stroke="#555555" stroke-width="1"/><path d="M3.5 7 H7.5" stroke="#555555" stroke-width="1"/></svg>
<div class="a" style="left:1356px;top:93px;width:2px;height:8px;background:#c8c8c8;"></div>
<div class="a" style="left:1357px;top:115px;width:1px;height:360px;background:#4d4d4d;"></div></body></html>
